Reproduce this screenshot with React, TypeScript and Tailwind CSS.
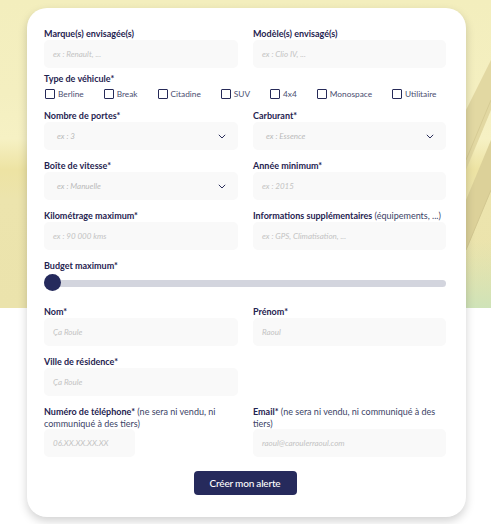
import React from "react";

const font = { fontFamily: "Lato, 'Noto Sans', sans-serif" };

function Label({ children, extra, lh }: { children: React.ReactNode; extra?: string; lh?: string }) {
  return (
    <p className={`text-[9px] ${lh ?? "leading-[12px]"} font-bold text-[#1f2350]`}>
      {children}
      {extra && <span className="font-normal text-[#3b3f66]">{extra}</span>}
    </p>
  );
}

function Input({ ph, w }: { ph: string; w?: string }) {
  return (
    <div className={`h-[28px] rounded-[5px] bg-[#f9f9f9] flex items-center pl-[9px] ${w ?? "w-full"}`}>
      <span className="text-[8px] italic text-[#c3c3c3]">{ph}</span>
    </div>
  );
}

function Select({ ph }: { ph: string }) {
  return (
    <div className="h-[28px] rounded-[5px] bg-[#f9f9f9] flex items-center justify-between pl-[13px] pr-[12px]">
      <span className="text-[8px] italic text-[#b9b9b9]">{ph}</span>
      <svg width="8" height="5" viewBox="0 0 8 5" fill="none">
        <path d="M0.8 0.8 L4 4 L7.2 0.8" stroke="#2a2e5a" strokeWidth="1" />
      </svg>
    </div>
  );
}

function Check({ label }: { label: string }) {
  return (
    <div className="flex items-center gap-[3px]">
      <div className="w-[10px] h-[10px] border-[1.3px] border-[#262a58] rounded-[1px] bg-white" />
      <span className="text-[8.3px] leading-[12px] text-[#4a4e70]">{label}</span>
    </div>
  );
}

export default function App() {
  return (
    <div className="relative w-[491px] h-[524px] bg-white overflow-hidden" style={font}>
      <div className="absolute top-0 left-0 w-full h-[308px]">
        <svg width="491" height="308" viewBox="0 0 491 308" className="block">
          <defs>
            <linearGradient id="bgl" x1="0" y1="0" x2="0" y2="1">
              <stop offset="0" stopColor="#f3eebd" />
              <stop offset="0.3" stopColor="#f4efc0" />
              <stop offset="0.45" stopColor="#f6f1c4" />
              <stop offset="0.55" stopColor="#ede3a3" />
              <stop offset="0.65" stopColor="#ece4ad" />
              <stop offset="1" stopColor="#ebe3ac" />
            </linearGradient>
            <linearGradient id="gr" x1="0" y1="0" x2="0" y2="1">
              <stop offset="0" stopColor="#d6e2b2" stopOpacity="0" />
              <stop offset="1" stopColor="#cfe3b8" />
            </linearGradient>
          </defs>
          <rect width="491" height="308" fill="url(#bgl)" />
          <polygon points="466,110 491,60 491,110 466,170" fill="#e2d8a2" />
          <polygon points="466,200 491,140 491,190 466,250" fill="#dcd199" />
          <line x1="466" y1="250" x2="491" y2="190" stroke="#d2c790" strokeWidth="1" />
          <line x1="466" y1="160" x2="491" y2="100" stroke="#d6cb94" strokeWidth="1" />
          <rect x="440" y="240" width="51" height="68" fill="url(#gr)" />
        </svg>
      </div>

      <div className="relative ml-[27px] mt-[8px] w-[439px] h-[509px] bg-white rounded-[20px] shadow-[0_4px_10px_rgba(0,0,0,0.18)] pl-[17px] pr-[20px] pt-[20px]">
        <div className="grid grid-cols-[194px_193px] gap-x-[15px]">
          <div>
            <Label>Marque(s) envisagée(s)</Label>
            <Input ph="ex : Renault, ..." />
          </div>
          <div>
            <Label>Modèle(s) envisagé(s)</Label>
            <Input ph="ex : Clio IV, ..." />
          </div>
        </div>

        <div className="mt-[5px]">
          <Label>Type de véhicule*</Label>
          <div className="flex gap-[20px] mt-[3px] pl-[1px]">
            <Check label="Berline" />
            <Check label="Break" />
            <Check label="Citadine" />
            <Check label="SUV" />
            <Check label="4x4" />
            <Check label="Monospace" />
            <Check label="Utilitaire" />
          </div>
        </div>

        <div className="grid grid-cols-[194px_193px] gap-x-[15px] gap-y-[10px] mt-[10px]">
          <div>
            <Label>Nombre de portes*</Label>
            <Select ph="ex : 3" />
          </div>
          <div>
            <Label>Carburant*</Label>
            <Select ph="ex : Essence" />
          </div>
          <div>
            <Label>Boîte de vitesse*</Label>
            <Select ph="ex : Manuelle" />
          </div>
          <div>
            <Label>Année minimum*</Label>
            <Input ph="ex : 2015" />
          </div>
          <div>
            <Label>Kilométrage maximum*</Label>
            <Input ph="ex : 90 000 kms" />
          </div>
          <div>
            <Label extra=" (équipements, ...)">Informations supplémentaires</Label>
            <Input ph="ex : GPS, Climatisation, ..." />
          </div>
        </div>

        <div className="mt-[10px]">
          <Label>Budget maximum*</Label>
          <div className="relative h-[20px] mt-[1px] flex items-center">
            <div className="w-full h-[7px] rounded-full bg-[#d3d5de]" />
            <div className="absolute left-0 top-[1px] w-[17px] h-[17px] rounded-full bg-[#252a5c]" />
          </div>
        </div>

        <div className="grid grid-cols-[194px_193px] gap-x-[15px] gap-y-[10px] mt-[13px]">
          <div>
            <Label>Nom*</Label>
            <Input ph="Ça Roule" />
          </div>
          <div>
            <Label>Prénom*</Label>
            <Input ph="Raoul" />
          </div>
          <div>
            <Label>Ville de résidence*</Label>
            <Input ph="Ça Roule" />
          </div>
          <div />
          <div>
            <Label lh="leading-[11.5px]" extra=" (ne sera ni vendu, ni communiqué à des tiers)">Numéro de téléphone*</Label>
            <Input ph="06.XX.XX.XX.XX" w="w-[91px]" />
          </div>
          <div>
            <Label lh="leading-[11.5px]" extra=" (ne sera ni vendu, ni communiqué à des tiers)">Email*</Label>
            <Input ph="raoul@caroulerraoul.com" />
          </div>
        </div>

        <div className="flex justify-center mt-[14px]">
          <button className="w-[103px] h-[24px] rounded-[4px] bg-[#262a5c] text-white text-[10px] font-medium tracking-[-0.2px]">
            Créer mon alerte
          </button>
        </div>
      </div>
    </div>
  );
}
